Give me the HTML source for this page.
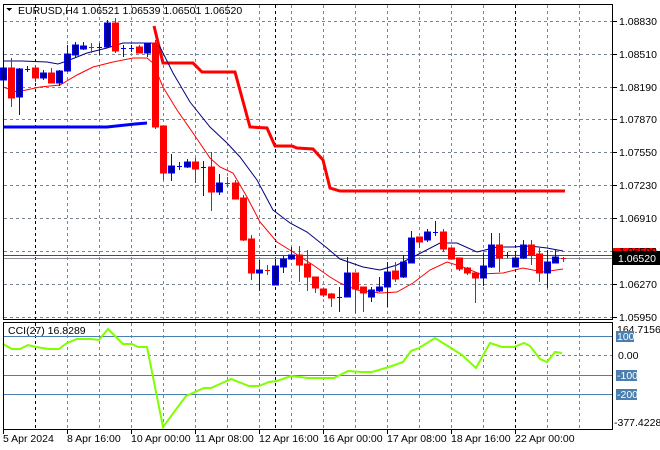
<!DOCTYPE html>
<html><head><meta charset="utf-8"><style>
html,body{margin:0;padding:0;background:#fff;width:660px;height:450px;overflow:hidden}
svg text{font-family:"Liberation Sans",sans-serif;font-size:10.5px;fill:#000}
</style></head><body>
<svg id="s" width="660" height="450" xmlns="http://www.w3.org/2000/svg" shape-rendering="crispEdges">
<rect width="660" height="450" fill="#fff"/>
<g id="grid" stroke="#7b8592" stroke-dasharray="3,3" stroke-width="1"></g>
<g id="cci_lines" stroke="#4a7fb0" stroke-width="1">
<line x1="4" y1="336.5" x2="612" y2="336.5"/>
<line x1="4" y1="375.5" x2="612" y2="375.5"/>
<line x1="4" y1="394.5" x2="612" y2="394.5"/>
</g>
<line x1="4" y1="255.5" x2="612" y2="255.5" stroke="#ff0000"/>
<line x1="4" y1="258.5" x2="612" y2="258.5" stroke="#8a8f96"/>
<g shape-rendering="auto" fill="none">
<polyline stroke="#0000ff" stroke-width="3" points="3,127 107,127 135,124 147,123"/>
<polyline stroke="#ff0000" stroke-width="3" points="154,26 163,63 193,63 202,72 235,72 250,127 267,128 275,146 292,146 297,148 313,149 323,160 330,188 340,191 565,191"/>
<polyline stroke="#000080" stroke-width="1" points="3,61 22,61 47,62 58,64 67,61 87,53 107,48 123,43 147,43 157,43 160,47 173,73 190,102 210,127 227,143 240,157 257,180 273,210 290,223 307,232 327,248 340,259 363,267 380,270 397,265 417,255 440,243 457,243 477,252 497,247 513,247 530,246 547,248 563,251"/>
<polyline stroke="#ff0000" stroke-width="1" points="3,87 17,92 40,87 60,85 77,75 93,67 113,62 133,58 147,58 153,63 163,87 177,110 193,133 210,158 220,167 233,173 247,197 260,222 277,242 293,252 313,265 330,277 340,283 357,290 380,293 397,292 413,283 430,270 447,262 463,267 480,274 503,273 523,268 543,272 563,269"/>
<polyline stroke="#7fff00" stroke-width="2" points="3,344 12,349 20,349 28,345 36,347 49,349 59,349 67,343 77,339 91,339 99,340 108,329 123,344 132,344 138,347 147,347 163,427 186,396 204,388 211,388 231,379 249,386 259,386 269,382 277,381 291,376 308,378 334,378 348,371 362,372 372,372 389,367 403,362 411,351 419,348 435,338 451,348 462,355 476,368 490,343 502,347 514,347 524,343 530,346 540,359 547,362 555,352 562,353"/>
</g>
<g id="candles"></g>
<g fill="none" stroke="#000" stroke-width="1">
<rect x="3.5" y="4.5" width="609" height="315"/>
<rect x="3.5" y="322.5" width="609" height="107"/>
</g>
<g id="axis"></g>
<text x="18" y="14">EURUSD,H4  1.06521 1.06539 1.06501 1.06520</text>
<polygon points="6,8 12,8 9,11" fill="#000"/>
<text x="8" y="334">CCI(27) 16.8289</text>
</svg>
<script>
var NS="http://www.w3.org/2000/svg",s=document.getElementById('s');
function el(p,t,a,txt){var e=document.createElementNS(NS,t);for(var k in a)e.setAttribute(k,a[k]);if(txt!=null)e.textContent=txt;document.getElementById(p).appendChild(e);return e;}
// grid
for(var x=35;x<=600;x+=32){el('grid','line',{x1:x+.5,y1:5,x2:x+.5,y2:319});el('grid','line',{x1:x+.5,y1:323,x2:x+.5,y2:429});}
[21,54,87,119,152,185,218,251,284,317].forEach(function(y){el('grid','line',{x1:4,y1:y+.5,x2:612,y2:y+.5});});
el('grid','line',{x1:4,y1:355.5,x2:612,y2:355.5});
[35,275,515].forEach(function(x){el('grid','line',{x1:x+.5,y1:5,x2:x+.5,y2:319,stroke:'#000'});el('grid','line',{x1:x+.5,y1:323,x2:x+.5,y2:429,stroke:'#000'});});
// candles: [bodyTop, bodyBot, wickTop, wickBot, color]
var C=[[68,80,66,82,'b'],[68,98,58,107,'r'],[69,97,68,115,'b'],[69,70,66,72,'b'],[68,78,65,82,'r'],[73,78,70,80,'b'],[73,83,68,83,'r'],[71,83,70,86,'b'],[54,71,45,72,'b'],[45,55,42,57,'b'],[46,49,42,50,'b'],[47,49,43,53,'r'],[47,49,43,55,'b'],[23,47,20,48,'b'],[23,51,18,53,'r'],[48,50,45,57,'b'],[48,49,45,52,'b'],[47,53,45,53,'r'],[43,53,43,57,'b'],[43,127,40,129,'r'],[126,173,126,180,'r'],[166,173,154,181,'b'],[166,167,162,170,'b'],[162,167,159,168,'b'],[162,169,158,183,'r'],[167,168,161,196,'b'],[167,192,152,211,'r'],[183,192,174,195,'b'],[183,184,177,187,'r'],[183,199,180,199,'r'],[198,240,195,241,'r'],[239,273,235,280,'r'],[270,273,260,291,'b'],[270,271,265,275,'r'],[266,285,260,285,'b'],[259,267,256,273,'b'],[255,259,247,260,'b'],[255,265,246,282,'r'],[264,277,250,291,'r'],[277,288,277,293,'r'],[289,295,288,297,'r'],[294,298,293,307,'r'],[297,298,287,312,'b'],[273,297,257,297,'b'],[273,289,273,313,'r'],[287,293,287,312,'r'],[290,297,287,302,'b'],[287,291,277,292,'b'],[272,287,262,307,'b'],[271,279,262,282,'r'],[262,277,255,278,'b'],[238,263,231,263,'b'],[237,242,237,248,'r'],[232,240,229,242,'b'],[232,233,221,236,'b'],[232,249,229,252,'r'],[248,259,248,259,'r'],[258,269,258,271,'r'],[268,273,267,275,'r'],[273,278,272,303,'r'],[266,278,253,286,'b'],[245,267,233,268,'b'],[245,258,233,272,'r'],[255,256,252,258,'b'],[258,267,252,267,'b'],[245,258,240,259,'b'],[245,255,240,265,'r'],[254,273,248,282,'r'],[262,273,250,288,'b'],[257,263,249,263,'b'],[258,259,257,262,'r']];
C.forEach(function(c,i){var x=3+8*i,col=c[4]=='b'?'#0000ff':'#ff0000',fill=c[4]=='b'?'#00008b':'#ff0000';
el('candles','line',{x1:x+.5,y1:c[2],x2:x+.5,y2:c[3],stroke:col});
var h=Math.max(1,c[1]-c[0]);
if(h<=2)el('candles','rect',{x:x-2,y:c[0],width:5,height:1,fill:col});
else el('candles','rect',{x:x-2.5,y:c[0],width:6,height:h,fill:fill,stroke:col,'stroke-width':1});
});
// axis
var P=[['1.08830',21],['1.08510',54],['1.08190',87],['1.07870',119],['1.07550',152],['1.07230',185],['1.06910',218],['1.06270',284],['1.05950',317]];
P.forEach(function(p){el('axis','line',{x1:613,y1:p[1]+.5,x2:617,y2:p[1]+.5,stroke:'#000'});el('axis','text',{x:619,y:p[1]+4},p[0]);});
el('axis','rect',{x:613,y:248,width:43,height:7,fill:'#ff0000'});
el('axis','text',{x:619,y:255},'1.06590');
el('axis','rect',{x:613,y:251,width:47,height:14,fill:'#000'});
el('axis','text',{x:618,y:262,style:'fill:#fff'},'1.06520');
el('axis','text',{x:617,y:333},'164.7156');
el('axis','rect',{x:616,y:331,width:18,height:11,fill:'#4a7fb0'});
el('axis','text',{x:617,y:340,style:'fill:#fff'},'100');
el('axis','text',{x:618,y:359},'0.00');
el('axis','rect',{x:616,y:370,width:21,height:11,fill:'#4a7fb0'});
el('axis','text',{x:617,y:379,style:'fill:#fff'},'-100');
el('axis','rect',{x:616,y:389,width:21,height:11,fill:'#4a7fb0'});
el('axis','text',{x:617,y:398,style:'fill:#fff'},'-200');
el('axis','text',{x:614,y:426},'-377.4228');
[['5 Apr 2024',2],['8 Apr 16:00',66],['10 Apr 00:00',130],['11 Apr 08:00',194],['12 Apr 16:00',258],['16 Apr 00:00',322],['17 Apr 08:00',386],['18 Apr 16:00',450],['22 Apr 00:00',514]].forEach(function(t){
el('axis','line',{x1:t[1]+1.5,y1:430,x2:t[1]+1.5,y2:434,stroke:'#000'});
el('axis','text',{x:t[1]+1,y:442},t[0]);});
</script>
</body></html>
